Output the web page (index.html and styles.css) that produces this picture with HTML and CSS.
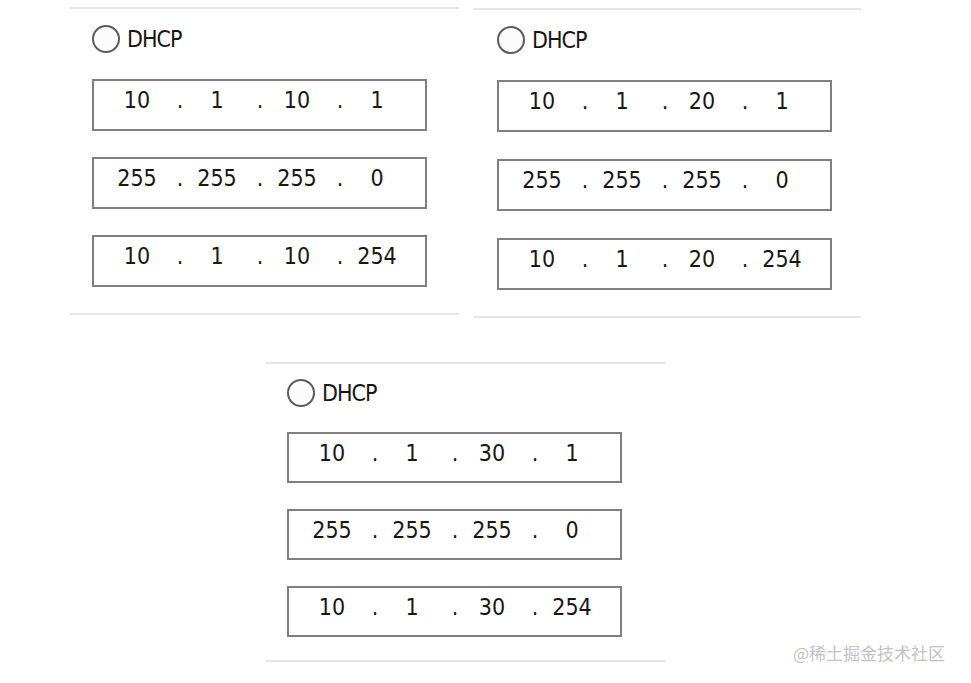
FILE: index.html
```html
<!DOCTYPE html>
<html lang="zh">
<head>
    <meta charset="UTF-8">
    <meta name="viewport" content="width=device-width, initial-scale=1.0">
    <title>DHCP</title>
    <link rel="stylesheet" href="styles.css">
</head>
<body>
    <div class="top-row">
        <div class="panel panel-one">
            <label class="radio-row"><span class="radio"></span><span class="radio-label">DHCP</span></label>
            <div class="ip-list">
                <div class="ip-box"><span class="octet">10</span><span class="dot">.</span><span class="octet">1</span><span class="dot">.</span><span class="octet">10</span><span class="dot">.</span><span class="octet">1</span></div>
                <div class="ip-box"><span class="octet">255</span><span class="dot">.</span><span class="octet">255</span><span class="dot">.</span><span class="octet">255</span><span class="dot">.</span><span class="octet">0</span></div>
                <div class="ip-box"><span class="octet">10</span><span class="dot">.</span><span class="octet">1</span><span class="dot">.</span><span class="octet">10</span><span class="dot">.</span><span class="octet">254</span></div>
            </div>
        </div>
        <div class="panel panel-two">
            <label class="radio-row"><span class="radio"></span><span class="radio-label">DHCP</span></label>
            <div class="ip-list">
                <div class="ip-box"><span class="octet">10</span><span class="dot">.</span><span class="octet">1</span><span class="dot">.</span><span class="octet">20</span><span class="dot">.</span><span class="octet">1</span></div>
                <div class="ip-box"><span class="octet">255</span><span class="dot">.</span><span class="octet">255</span><span class="dot">.</span><span class="octet">255</span><span class="dot">.</span><span class="octet">0</span></div>
                <div class="ip-box"><span class="octet">10</span><span class="dot">.</span><span class="octet">1</span><span class="dot">.</span><span class="octet">20</span><span class="dot">.</span><span class="octet">254</span></div>
            </div>
        </div>
    </div>

    <div class="panel panel-three">
        <label class="radio-row"><span class="radio"></span><span class="radio-label">DHCP</span></label>
        <div class="ip-list">
            <div class="ip-box"><span class="octet">10</span><span class="dot">.</span><span class="octet">1</span><span class="dot">.</span><span class="octet">30</span><span class="dot">.</span><span class="octet">1</span></div>
            <div class="ip-box"><span class="octet">255</span><span class="dot">.</span><span class="octet">255</span><span class="dot">.</span><span class="octet">255</span><span class="dot">.</span><span class="octet">0</span></div>
            <div class="ip-box"><span class="octet">10</span><span class="dot">.</span><span class="octet">1</span><span class="dot">.</span><span class="octet">30</span><span class="dot">.</span><span class="octet">254</span></div>
        </div>
    </div>

    <div class="watermark">@稀土掘金技术社区</div>
</body>
</html>
```

FILE: styles.css
```css
body {
    font-family: "DejaVu Sans", Verdana, sans-serif;
    font-stretch: condensed;
    background-color: #ffffff;
    color: #161616;
    margin: 0;
    padding-top: 7px;
    min-height: 683px;
    box-sizing: border-box;
    position: relative;
}
.top-row {
    display: flex;
    align-items: flex-start;
    gap: 15px;
    margin-left: 70px;
}
.panel {
    border-top: 2px solid #e6e6e6;
    border-bottom: 2px solid #e6e6e6;
    box-sizing: border-box;
}
.panel-one {
    width: 389px;
    padding: 16px 0 26px 22px;
}
.panel-two {
    width: 387px;
    margin-top: 1px;
    padding: 16px 0 26px 23px;
}
.panel-two .ip-list {
    gap: 27px;
}
.panel-three {
    width: 399px;
    margin: 44px 0 0 266px;
    padding: 15px 0 23px 21px;
}
.panel-three .ip-list {
    margin-top: 25px;
}
.panel-three .ip-box {
    height: 51px;
}
.radio-row {
    display: flex;
    align-items: center;
    height: 28px;
}
.radio {
    width: 28px;
    height: 28px;
    border: 2px solid #5c5c5c;
    border-radius: 50%;
    box-sizing: border-box;
    background-color: #fcfcfc;
}
.radio-label {
    margin-left: 7px;
    font-size: 23px;
    letter-spacing: -1px;
    line-height: 28px;
}
.ip-list {
    display: flex;
    flex-direction: column;
    gap: 26px;
    margin-top: 26px;
}
.ip-box {
    display: flex;
    width: 335px;
    height: 52px;
    border: 2px solid #7f7f7f;
    box-sizing: border-box;
    padding: 8px 0 0 13px;
    font-size: 23px;
    line-height: 23px;
}
.octet {
    width: 60px;
    text-align: center;
}
.dot {
    width: 20px;
    padding-left: 6px;
    box-sizing: border-box;
    text-align: center;
}
.watermark {
    position: absolute;
    right: 26px;
    top: 640px;
    font-family: "Noto Sans CJK SC", sans-serif;
    font-stretch: normal;
    font-size: 17px;
    color: #c2c2c2;
}
```
